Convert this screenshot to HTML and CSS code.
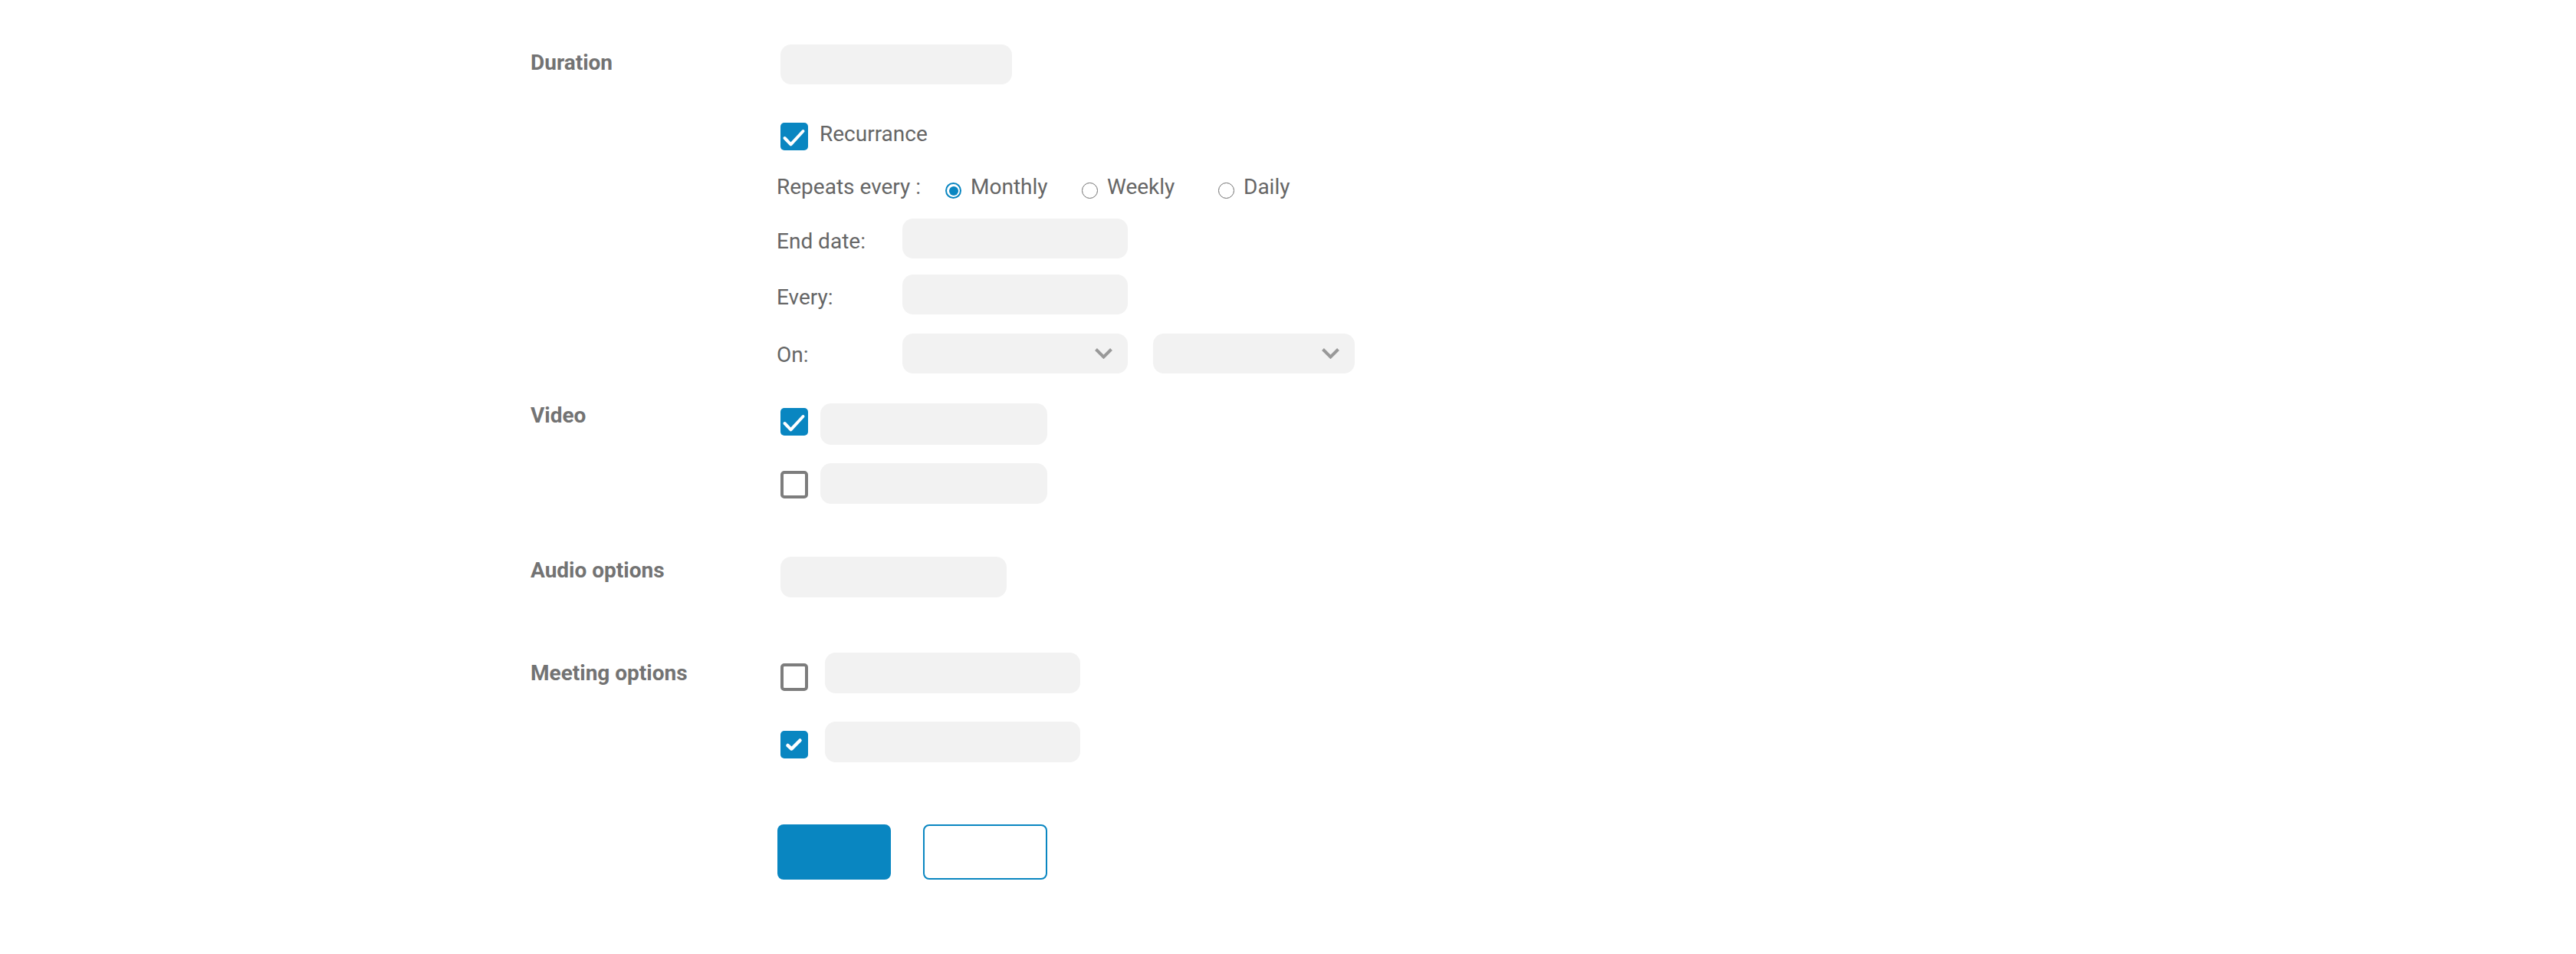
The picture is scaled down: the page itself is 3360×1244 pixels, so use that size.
FILE: index.html
```html
<!DOCTYPE html>
<html lang="en">
<head>
  <meta charset="UTF-8">
  <meta name="viewport" content="width=device-width, initial-scale=1.0">
  <title>Schedule Meeting</title>
  <link rel="stylesheet" href="styles.css">
</head>
<body>

  <form class="meeting-form">

    <div class="field">
      <div class="field-label label-duration">Duration</div>
      <div class="field-body">
        <input type="text" class="input input-duration">

        <label class="recurrance">
          <span class="check checked">
            <svg viewBox="0 0 36 36"><path d="M5.5 20 L13.5 28.3 L29.5 11"/></svg>
          </span>
          <span class="check-text">Recurrance</span>
        </label>

        <div class="recur">
          <div class="repeats">
            <span class="repeats-label">Repeats every :</span>
            <span class="radio-option"><span class="radio selected"></span>Monthly</span>
            <span class="radio-option"><span class="radio"></span>Weekly</span>
            <span class="radio-option"><span class="radio"></span>Daily</span>
          </div>
          <div class="recur-row row-end">
            <span class="recur-label">End date:</span>
            <input type="text" class="input input-recur">
          </div>
          <div class="recur-row row-every">
            <span class="recur-label">Every:</span>
            <input type="text" class="input input-recur">
          </div>
          <div class="recur-row row-on">
            <span class="recur-label">On:</span>
            <div class="select-wrap">
              <select class="select"></select>
              <svg class="chevron" viewBox="0 0 25 15"><path d="M2.5 2.5 L12.5 12.5 L22.5 2.5"/></svg>
            </div>
            <div class="select-wrap select-narrow">
              <select class="select"></select>
              <svg class="chevron" viewBox="0 0 25 15"><path d="M2.5 2.5 L12.5 12.5 L22.5 2.5"/></svg>
            </div>
          </div>
        </div>
      </div>
    </div>

    <div class="field field-video">
      <div class="field-label label-video">Video</div>
      <div class="field-body">
        <div class="option-row video-first">
          <span class="check checked">
            <svg viewBox="0 0 36 36"><path d="M5.5 20 L13.5 28.3 L29.5 11"/></svg>
          </span>
          <input type="text" class="input input-video">
        </div>
        <div class="option-row video-second">
          <span class="check"></span>
          <input type="text" class="input input-video">
        </div>
      </div>
    </div>

    <div class="field field-audio">
      <div class="field-label label-audio">Audio options</div>
      <div class="field-body">
        <input type="text" class="input input-audio">
      </div>
    </div>

    <div class="field field-meeting">
      <div class="field-label label-meeting">Meeting options</div>
      <div class="field-body">
        <div class="option-row wide meeting-first">
          <span class="check"></span>
          <input type="text" class="input input-meeting">
        </div>
        <div class="option-row wide meeting-second">
          <span class="check checked">
            <svg class="small-tick" viewBox="0 0 36 36"><path d="M9.5 19 L14.5 23.5 L25.5 12.5"/></svg>
          </span>
          <input type="text" class="input input-meeting">
        </div>
      </div>
    </div>

    <div class="actions">
      <button type="button" class="btn btn-primary"></button>
      <button type="button" class="btn btn-outline"></button>
    </div>

  </form>

</body>
</html>
```

FILE: styles.css
```css
body {
  margin: 0;
  background: #fff;
  font-family: Roboto, "Liberation Sans", sans-serif;
  color: #666;
}
.meeting-form {
  padding: 58px 0 0 692px;
}
.field {
  display: grid;
  grid-template-columns: 326px auto;
  align-items: start;
}
.field-label {
  font-size: 28px;
  line-height: 34px;
  font-weight: 700;
  color: #737373;
}
.label-duration {
  margin-top: 7px;
}
.label-video {
  margin-top: -1px;
}
.label-audio {
  margin-top: 1px;
}
.label-meeting {
  margin-top: 10px;
}
.field-body {
  display: flex;
  flex-direction: column;
  align-items: flex-start;
}

.input, .select {
  display: block;
  box-sizing: border-box;
  border: none;
  outline: none;
  padding: 0 16px;
  margin: 0;
  background: #f2f2f2;
  border-radius: 14px;
  height: 53px;
}
.input-duration {
  width: 302px;
  height: 52px;
}

/* checkboxes */
.check {
  box-sizing: border-box;
  flex: none;
  width: 36px;
  height: 36px;
  border: 4px solid #7d7d7d;
  border-radius: 5px;
  background: #fff;
}
.check.checked {
  border: none;
  background: #0986c1;
}
.check svg {
  display: block;
  width: 36px;
  height: 36px;
  fill: none;
  stroke: #fff;
  stroke-width: 4;
  stroke-linecap: round;
  stroke-linejoin: round;
}
.check svg.small-tick {
  stroke-width: 4.5;
}

.recurrance {
  display: flex;
  align-items: flex-start;
  gap: 15px;
  margin-top: 46px;
  font-size: 28px;
  line-height: 34px;
}
.recurrance .check {
  margin-top: 4px;
}
.check-text {
  padding-top: 2px;
}

/* recurrence details */
.recur {
  margin-left: -5px;
  font-size: 28px;
  line-height: 34px;
}
.repeats {
  display: flex;
  align-items: flex-start;
  margin-top: 29px;
  padding-top: 2px;
}
.repeats-label {
  width: 220px;
}
.radio-option {
  display: flex;
  align-items: flex-start;
  gap: 12px;
  width: 178px;
}
.radio {
  position: relative;
  box-sizing: border-box;
  width: 21px;
  height: 21px;
  margin-top: 11px;
  border: 1.5px solid #6f6f6f;
  border-radius: 50%;
}
.radio.selected {
  border: 2.5px solid #0986c1;
}
.radio.selected::after {
  content: "";
  position: absolute;
  inset: 2.5px;
  border-radius: 50%;
  background: #0986c1;
}
.recur-row {
  display: flex;
  align-items: flex-start;
}
.row-end {
  margin-top: 24px;
}
.row-every {
  margin-top: 21px;
}
.row-on {
  margin-top: 25px;
  gap: 33px;
}
.recur-label {
  width: 164px;
  padding-top: 13px;
}
.row-on .recur-label {
  width: 131px;
  padding-top: 11px;
}
.input-recur {
  width: 294px;
  height: 52px;
}
.select-wrap {
  position: relative;
  width: 294px;
}
.select-wrap.select-narrow {
  width: 263px;
}
.select {
  width: 100%;
  height: 52px;
  appearance: none;
  -webkit-appearance: none;
}
.chevron {
  position: absolute;
  right: 19px;
  top: 18px;
  width: 25px;
  height: 15px;
  fill: none;
  stroke: #999;
  stroke-width: 4;
  stroke-linejoin: miter;
}

/* option rows */
.field-video {
  margin-top: 39px;
}
.option-row {
  display: flex;
  align-items: flex-start;
  gap: 16px;
}
.video-first .check {
  margin-top: 6px;
}
.video-second {
  margin-top: 24px;
}
.video-second .check {
  margin-top: 10px;
}
.input-video {
  width: 296px;
  height: 54px;
}
.video-second .input-video {
  height: 53px;
}
.field-audio {
  margin-top: 69px;
}
.input-audio {
  width: 295px;
}
.field-meeting {
  margin-top: 72px;
}
.option-row.wide {
  gap: 22px;
}
.meeting-first .check {
  margin-top: 14px;
}
.meeting-second {
  margin-top: 37px;
}
.meeting-second .check {
  margin-top: 12px;
}
.input-meeting {
  width: 333px;
}

/* buttons */
.actions {
  display: flex;
  gap: 42px;
  margin: 81px 0 0 322px;
}
.btn {
  box-sizing: border-box;
  height: 72px;
  border-radius: 8px;
  cursor: pointer;
}
.btn-primary {
  width: 148px;
  border: none;
  background: #0986c1;
}
.btn-outline {
  width: 162px;
  border: 2.5px solid #0986c1;
  background: #fff;
}
```
